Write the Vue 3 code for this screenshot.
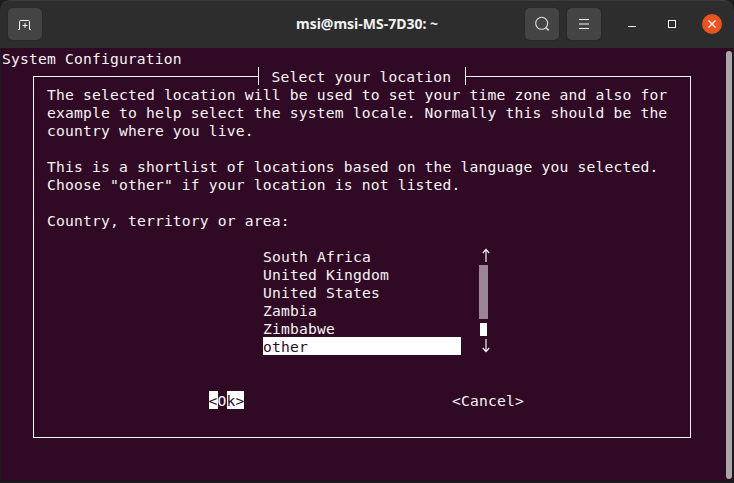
<script setup>
const intro = [
  'The selected location will be used to set your time zone and also for',
  'example to help select the system locale. Normally this should be the',
  'country where you live.',
  '',
  'This is a shortlist of locations based on the language you selected.',
  'Choose "other" if your location is not listed.',
  '',
  'Country, territory or area:',
  ''
]
const items = [
  { name: 'South Africa', mark: 'up' },
  { name: 'United Kingdom', mark: 'thumb' },
  { name: 'United States', mark: 'thumb' },
  { name: 'Zambia', mark: 'thumb' },
  { name: 'Zimbabwe', mark: 'block' },
  { name: 'other', mark: 'down', selected: true }
]
</script>

<template>
  <div class="window">
    <header class="titlebar">
      <button class="tb-btn">
        <svg width="16" height="16" viewBox="0 0 16 16" fill="none" stroke="#f0f0f0" stroke-width="1">
          <path d="M1 13.5h1.5V5.5a1 1 0 0 1 1-1h8a1 1 0 0 1 1 1v8h1.5" />
          <path d="M8 7v5M5.5 9.5h5" />
        </svg>
      </button>
      <div class="title">msi@msi-MS-7D30: ~</div>
      <div class="tb-right">
        <button class="tb-btn">
          <svg width="16" height="16" viewBox="0 0 16 16" fill="none" stroke="#dedede" stroke-width="1.1">
            <circle cx="7.7" cy="7.3" r="6" />
            <path d="M12 11.8l2.6 2.6" stroke-width="1.5" />
          </svg>
        </button>
        <button class="tb-btn">
          <svg width="16" height="16" viewBox="0 0 16 16" fill="none" stroke="#f0f0f0" stroke-width="1">
            <path d="M3 3.5h10M3 8h10M3 12.5h10" />
          </svg>
        </button>
        <div class="win-ctrls">
          <svg class="ctl" width="16" height="16" viewBox="0 0 16 16"><rect x="4" y="10" width="8" height="1" fill="#f2f2f2" /></svg>
          <svg class="ctl" width="16" height="16" viewBox="0 0 16 16" fill="none"><rect x="4.5" y="4.5" width="7" height="7" stroke="#f2f2f2" /></svg>
          <div class="close">
            <svg width="20" height="20" viewBox="0 0 20 20" fill="none" stroke="#fff" stroke-width="1.3"><path d="M6.5 6.5l7 7M13.5 6.5l-7 7" /></svg>
          </div>
        </div>
      </div>
    </header>

    <main class="terminal">
      <div class="row status">System Configuration</div>
      <section class="dialog">
        <div class="legend">Select your location</div>
        <div v-for="(line, i) in intro" :key="i" class="row">{{ line }}</div>
        <div class="list">
          <div v-for="item in items" :key="item.name" class="list-row">
            <div class="item" :class="{ selected: item.selected }">{{ item.name }}</div>
            <div class="mark" :class="item.mark">
              <svg v-if="item.mark === 'up'" width="9" height="18" viewBox="0 0 9 18" fill="none" stroke="#f6f4f5" stroke-width="1.2">
                <path d="M4 3v12M0.8 6L4 2.4 7.2 6" />
              </svg>
              <svg v-else-if="item.mark === 'down'" width="9" height="18" viewBox="0 0 9 18" fill="none" stroke="#f6f4f5" stroke-width="1.2">
                <path d="M4 2v12M0.8 11L4 14.6 7.2 11" />
              </svg>
              <span v-else-if="item.mark === 'block'" class="block-glyph"></span>
            </div>
          </div>
        </div>
        <div class="buttons">
          <div class="btn ok"><span class="on">&lt;</span><span>O</span><span class="on">k&gt;</span></div>
          <div class="btn cancel">&lt;Cancel&gt;</div>
        </div>
      </section>
      <div class="scrollbar"></div>
    </main>
  </div>
</template>

<style scoped>
.window {
  width: 734px;
  height: 483px;
  box-sizing: border-box;
  display: flex;
  flex-direction: column;
  background: #1c1c1c;
  padding: 0 1px 2px;
  overflow: hidden;
}
.titlebar {
  height: 48px;
  flex: none;
  box-sizing: border-box;
  margin: 0 -1px;
  padding: 7px 8px 8px 8px;
  display: flex;
  align-items: flex-start;
  position: relative;
  background: #2d2d2d;
  border-top: 1px solid #3c3c3c;
  border-radius: 10px 10px 0 0;
}
.tb-btn {
  width: 34px;
  height: 32px;
  padding: 0;
  border: none;
  border-radius: 5px;
  background: #444444;
  box-shadow: 0 0 0 1px #292929;
  display: flex;
  align-items: center;
  justify-content: center;
}
.title {
  position: absolute;
  left: 0;
  right: 0;
  top: 13px;
  text-align: center;
  font: 700 14px/20px "Noto Sans", "Open Sans", sans-serif;
  color: #f2f2f2;
}
.tb-right {
  margin-left: auto;
  display: flex;
  gap: 8px;
  align-items: flex-start;
  position: relative;
}
.win-ctrls {
  margin-left: 15px;
  width: 102px;
  height: 32px;
  display: flex;
  align-items: center;
  gap: 24px;
}
.ctl {
  flex: none;
}
.close {
  width: 20px;
  height: 20px;
  margin-left: -2px;
  border-radius: 50%;
  background: #e95420;
  flex: none;
}
.close svg {
  display: block;
}
.terminal {
  flex: 1;
  position: relative;
  background: #300a24;
  padding: 1px 0 0 1px;
  color: #f6f4f5;
  font-family: "DejaVu Sans Mono", monospace;
  font-size: 14.67px;
  letter-spacing: 0.167px;
  line-height: 20px;
  white-space: pre;
}
.row {
  height: 18px;
  padding-left: 0.5px;
}
.row.status {
  padding-left: 0;
}
.dialog {
  position: relative;
  box-sizing: border-box;
  margin: 9px 0 0 31px;
  width: 658px;
  height: 362px;
  border: 1.5px solid #f6f4f5;
  padding: 7.5px 0 0 12.5px;
}
.legend {
  position: absolute;
  top: -10.5px;
  left: 223.5px;
  width: 208.5px;
  height: 18px;
  box-sizing: border-box;
  padding-left: 13px;
  background: #300a24;
  border-left: 1.5px solid #f6f4f5;
  border-right: 1.5px solid #f6f4f5;
}
.list {
  margin-left: 216px;
}
.list-row {
  display: flex;
  height: 18px;
}
.item {
  width: 198px;
  box-sizing: border-box;
  padding-left: 0.5px;
}
.item.selected {
  background: #ffffff;
  color: #300a24;
}
.mark {
  margin-left: 18px;
  width: 9px;
  height: 18px;
  position: relative;
}
.mark svg {
  display: block;
  margin-left: 3px;
}
.mark.thumb {
  background: #9b8597;
}
.block-glyph {
  display: block;
  position: absolute;
  left: 1px;
  top: 4px;
  width: 7px;
  height: 13px;
  background: #ffffff;
}
.buttons {
  display: flex;
  margin-top: 36px;
  margin-left: 162px;
}
.btn {
  height: 18px;
}
.ok {
  display: flex;
}
.on {
  background: #ffffff;
  color: #300a24;
}
.cancel {
  margin-left: 207.5px;
}
.scrollbar {
  position: absolute;
  right: 1px;
  top: 3px;
  bottom: 2px;
  width: 6px;
  border-radius: 3px;
  background: #a9a7a8;
}
</style>

<style>
html, body {
  margin: 0;
  background: #1c1c1c;
}
</style>
